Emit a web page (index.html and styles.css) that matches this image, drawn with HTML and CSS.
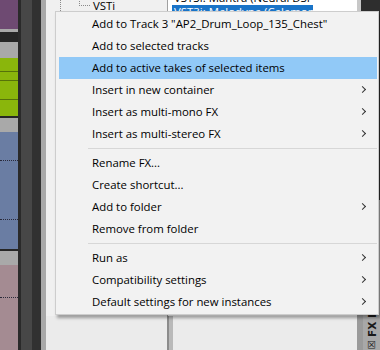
FILE: index.html
```html
<!DOCTYPE html>
<html lang="en">
<head>
  <meta charset="UTF-8" />
  <meta name="viewport" content="width=device-width, initial-scale=1.0" />
  <title>FX context menu</title>
  <link rel="stylesheet" href="styles.css">
</head>
<body>
  <div class="app">
    <!-- arrange view edge -->
    <div class="tracks">
      <div class="track purple"></div>
      <div class="track gap"></div>
      <div class="track green"></div>
      <div class="track gap"></div>
      <div class="track blue"><span class="wave"></span><span class="wave"></span></div>
      <div class="track gap"></div>
      <div class="track pink"><span class="wave"></span></div>
    </div>
    <div class="frame"></div>

    <!-- fx browser window -->
    <div class="panel">
      <div class="tree">
        <div class="tree-row">
          <span class="tree-line"></span>
          <span class="tree-branch"></span>
          <span class="tree-label">VSTi</span>
        </div>
      </div>
      <div class="listbox">
        <div class="list-row">VST3i: Mantra (Neural DSP)</div>
        <div class="list-row selected">VST3i: Melodyne (Celemony)</div>
      </div>
      <div class="dock">
        <div class="dock-dark"></div>
        <div class="dock-tab">
          <span class="dock-check">&#x2612;</span>
          <span class="dock-label">FX Browser</span>
        </div>
      </div>
      <div class="bottom-left"></div>
      <div class="bottom-mid"></div>
    </div>
  </div>

  <ul class="menu">
    <li class="item">Add to Track 3 "AP2_Drum_Loop_135_Chest"</li>
    <li class="item">Add to selected tracks</li>
    <li class="item active">Add to active takes of selected items</li>
    <li class="item sub">Insert in new container</li>
    <li class="item sub">Insert as multi-mono FX</li>
    <li class="item sub">Insert as multi-stereo FX</li>
    <li class="sep"></li>
    <li class="item">Rename FX...</li>
    <li class="item">Create shortcut...</li>
    <li class="item sub">Add to folder</li>
    <li class="item">Remove from folder</li>
    <li class="sep"></li>
    <li class="item sub">Run as</li>
    <li class="item sub">Compatibility settings</li>
    <li class="item sub">Default settings for new instances</li>
  </ul>
</body>
</html>
```

FILE: styles.css
```css
body {
  margin: 0;
  width: 380px;
  height: 350px;
  overflow: hidden;
  font-family: 'Open Sans', 'Noto Sans', sans-serif;
  font-size: 11.4px;
  color: #000;
  background: #f0f0f0;
}

.app {
  display: flex;
  height: 350px;
}

/* tracks */
.tracks {
  width: 18px;
  display: flex;
  flex-direction: column;
  background: #a9a9a9;
}

.purple {
  height: 29px;
  background: #6e4a72;
  border-bottom: 3px solid #a9a9a9;
}

.gap {
  background: #a9a9a9;
  border-top: 10px solid #262626;
  height: 16px;
}

.track.gap:nth-child(4),
.track.gap:nth-child(6) {
  border-top: 2px solid #262626;
  height: 14px;
}

.green {
  height: 58px;
  background: #8ab60c;
  background-image: linear-gradient(#8ab60c 13px, #56720a 13px, #56720a 14px, #8ab60c 14px, #8ab60c 22px, #56720a 22px, #56720a 23px, #8ab60c 23px, #8ab60c 41px, #56720a 41px, #56720a 42px, #8ab60c 42px);
}

.blue {
  height: 117px;
  background: #6a7da3;
  display: flex;
  flex-direction: column;
  justify-content: space-around;
}

.pink {
  flex: 1;
  background: #a48b92;
  display: flex;
  flex-direction: column;
  padding-top: 32px;
}

.wave {
  display: block;
  height: 1px;
  border-top: 1px dotted #2a2a3a;
}

.frame {
  width: 28px;
  background: linear-gradient(90deg, #2a2a2a 0 3px, #474747 3px 14px, #313131 14px 23px, #a8a8a8 23px);
}

/* fx browser */
.panel {
  flex: 1;
  display: grid;
  grid-template-columns: 121px 190px 23px;
  grid-template-rows: 316px 34px;
  background: #f0f0f0;
}

.tree {
  overflow: hidden;
}

.tree-row {
  display: flex;
  align-items: center;
  height: 16px;
  margin-top: -3px;
}

.tree-line {
  width: 0;
  height: 16px;
  margin-left: 14px;
  border-left: 1px dotted #8a8a8a;
}

.tree-branch {
  width: 10px;
  height: 8px;
  margin-left: 18px;
  align-self: flex-start;
  border-left: 1px dotted #8a8a8a;
  border-bottom: 1px dotted #8a8a8a;
}

.tree-label {
  margin-left: 3px;
}

.listbox {
  background: #fff;
  border-left: 1px solid #a0a0a0;
  overflow: hidden;
  padding-left: 4px;
}

.list-row {
  width: 139px;
  height: 14px;
  line-height: 14px;
  padding-left: 2px;
  white-space: nowrap;
  overflow: hidden;
}

.list-row:first-child {
  margin-top: -9px;
}

.selected {
  background: #1a74c8;
  color: #fff;
}

.dock {
  grid-row: 1 / 3;
  grid-column: 3;
  display: flex;
  flex-direction: column;
}

.dock-dark {
  height: 200px;
  background: #2e2e2e;
  border-left: 4px solid #c8c8c8;
}

.dock-tab {
  flex: 1;
  background: #a8a8a8;
  border-right: 6px solid #9a9a9a;
  writing-mode: vertical-rl;
  transform: rotate(180deg);
  display: flex;
  align-items: center;
  gap: 2px;
  font-family: 'DejaVu Sans', sans-serif;
  font-size: 10.5px;
  font-weight: bold;
  color: #1a1a1a;
}

.dock-check {
  font-size: 10px;
  font-weight: normal;
}

.bottom-left {
  grid-row: 2;
  grid-column: 1;
  background: #ebebeb;
}

.bottom-mid {
  grid-row: 2;
  grid-column: 2;
  background: #ebebeb;
  border-left: 2px solid #8c8c8c;
  box-shadow: inset 4px 0 0 #b9b9b9;
}

/* context menu */
.menu {
  position: absolute;
  left: 55px;
  top: 11px;
  width: 318px;
  margin: 0;
  padding: 1px 1px 1px 3px;
  list-style: none;
  background: #f2f2f2;
  border: 1px solid #cdcdcd;
  box-shadow: 2px 3px 3px rgba(0, 0, 0, 0.35);
}

.item {
  height: 22px;
  line-height: 22px;
  padding-left: 33px;
  white-space: nowrap;
  position: relative;
}

.item.active {
  background: #91c9f7;
}

.item.sub::after {
  content: "";
  position: absolute;
  right: 12px;
  top: 8px;
  width: 4px;
  height: 4px;
  border-top: 1px solid #333;
  border-right: 1px solid #333;
  transform: rotate(45deg);
}

.sep {
  height: 7px;
  margin-left: 29px;
  background: linear-gradient(transparent 3px, #d7d7d7 3px, #d7d7d7 4px, transparent 4px);
}
```
